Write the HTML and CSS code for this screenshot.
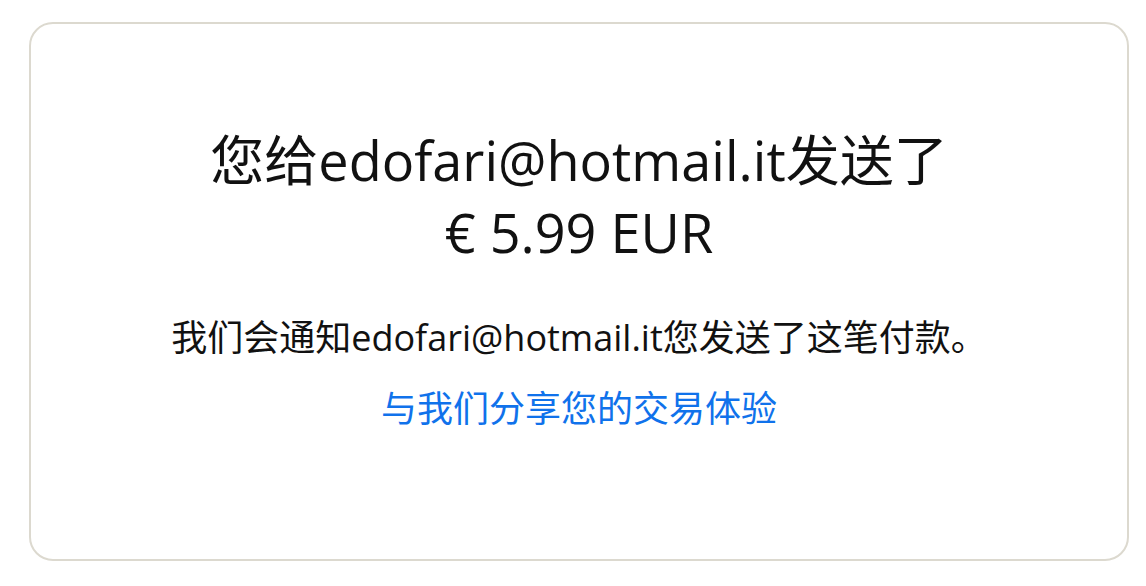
FILE: index.html
```html
<!DOCTYPE html>
<html lang="zh-CN">
  <head>
    <meta charset="UTF-8" />
    <meta name="viewport" content="width=device-width, initial-scale=1.0" />
    <title>付款已发送</title>
    <link rel="stylesheet" href="styles.css">
  </head>
  <body>
    <div class="card">
      <h1 class="title">
        <span class="line">您给edofari@hotmail.it发送了</span>
        <span class="line">€ 5.99 EUR</span>
      </h1>
      <p class="notice">我们会通知edofari@hotmail.it您发送了这笔付款。</p>
      <a class="share" href="#">与我们分享您的交易体验</a>
    </div>
  </body>
</html>
```

FILE: styles.css
```css
body {
  margin: 0;
  padding: 22px 17px 0 29px;
  background: #ffffff;
  font-family: "Open Sans", "Noto Sans CJK SC", sans-serif;
  color: #111111;
}
.card {
  box-sizing: border-box;
  height: 539px;
  border: 2px solid #dcd9cf;
  border-radius: 24px;
  padding-top: 100px;
  display: flex;
  flex-direction: column;
  align-items: center;
  text-align: center;
}
.title {
  margin: 0;
  font-size: 54px;
  font-weight: 400;
  line-height: 72px;
}
.line {
  display: block;
}
.notice {
  margin: 48px 0 0;
  font-size: 36px;
  line-height: 44px;
}
.share {
  margin-top: 27px;
  font-size: 36px;
  line-height: 44px;
  color: #1072eb;
  text-decoration: none;
}
```
